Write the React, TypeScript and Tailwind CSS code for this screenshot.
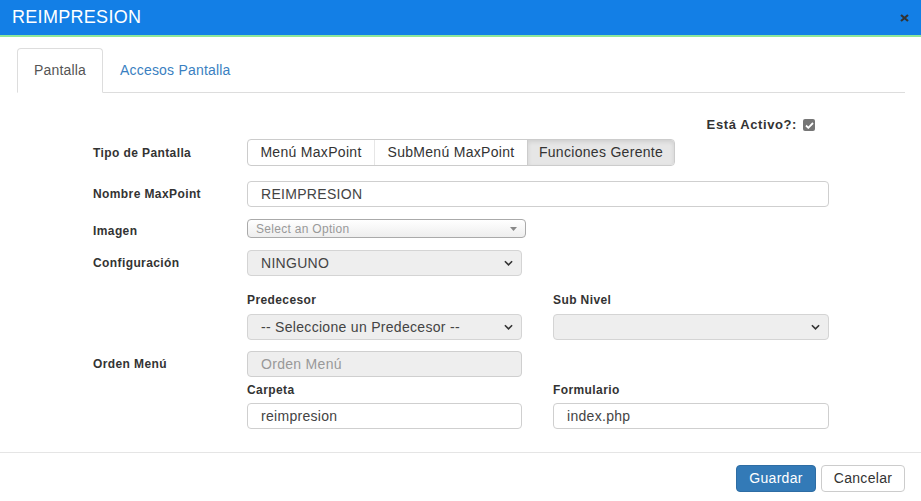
import React from "react";

const Chevron = () => (
  <svg className="w-[9px] h-[6px]" viewBox="0 0 10 6" fill="none" stroke="#333" strokeWidth="1.8">
    <path d="M1 1l4 4 4-4" />
  </svg>
);

const SelectBox = ({ value, w = "w-[275px]" }: { value: string; w?: string }) => (
  <div className={`${w} h-[26px] flex items-center justify-between rounded-[4px] border border-[#d4d4d4] bg-[#eeeeee] pl-[13px] pr-[8px] text-[14px] tracking-[0.3px] text-[#444]`}>
    <span>{value}</span>
    <Chevron />
  </div>
);

const TextBox = ({ value, w = "w-[275px]", disabled = false }: { value: string; w?: string; disabled?: boolean }) => (
  <div
    className={`${w} h-[26px] flex items-center rounded-[4px] border border-[#cfcfcf] pl-[13px] text-[14px] tracking-[0.3px] ${
      disabled ? "bg-[#eeeeee] text-[#999]" : "bg-white text-[#444]"
    }`}
  >
    {value}
  </div>
);

export default function App() {
  return (
    <div className="w-[921px] h-[501px] bg-white font-['Liberation_Sans',Arial,sans-serif] text-[#333] overflow-hidden">
      {/* header */}
      <div className="h-[37px] bg-[#137fe6] border-b-[2px] border-[#8fe69a] flex items-center justify-between pl-[12px] pr-[12px]">
        <h1 className="text-[18px] text-white tracking-[0.3px]">REIMPRESION</h1>
        <svg className="w-[9px] h-[8px]" viewBox="0 0 9 8" stroke="#333" strokeWidth="2.2">
          <path d="M1 1l7 6M8 1L1 7" />
        </svg>
      </div>

      {/* tabs */}
      <div className="px-[17px] pr-[16px] pt-[11px]">
        <div className="flex border-b border-[#dddddd] h-[45px]">
          <div className="w-[86px] h-[45px] -mb-px flex items-center justify-center rounded-t-[4px] border border-[#dddddd] border-b-white bg-white text-[14px] tracking-[0.2px] text-[#555]">
            Pantalla
          </div>
          <div className="ml-[17px] flex items-center text-[14px] tracking-[0.2px] text-[#3a7fc1]">Accesos Pantalla</div>
        </div>
      </div>

      {/* form */}
      <div className="pl-[93px] w-[829px]">
        <div className="mt-[25px] h-[14px] flex items-center justify-end pr-[14px] text-[13px] font-bold tracking-[0.6px] text-[#333]">
          <span>Está Activo?:</span>
          <span className="ml-[6px] w-[12px] h-[12px] rounded-[2px] bg-[#767676] flex items-center justify-center">
            <svg className="w-[9px] h-[7px]" viewBox="0 0 9 7" fill="none" stroke="white" strokeWidth="1.8">
              <path d="M1 3.5l2.3 2.3L8 1" />
            </svg>
          </span>
        </div>

        <div className="mt-[7px] flex items-center">
          <div className="w-[154px] text-[12px] font-bold tracking-[0.4px]">Tipo de Pantalla</div>
          <div className="flex h-[27px] rounded-[4px] border border-[#cccccc] text-[14px] tracking-[0.3px] text-[#333]">
            <div className="w-[126px] flex items-center justify-center">Menú MaxPoint</div>
            <div className="w-[153px] flex items-center justify-center border-l border-[#e6e6e6]">SubMenú MaxPoint</div>
            <div className="w-[147px] flex items-center justify-center bg-[#e6e6e6] border-l border-[#cccccc] rounded-r-[3px] shadow-[inset_0_2px_4px_rgba(0,0,0,0.1)]">
              Funciones Gerente
            </div>
          </div>
        </div>

        <div className="mt-[15px] flex items-center">
          <div className="w-[154px] text-[12px] font-bold tracking-[0.4px]">Nombre MaxPoint</div>
          <TextBox value="REIMPRESION" w="w-[582px]" />
        </div>

        <div className="mt-[12px] flex items-start h-[19px]">
          <div className="w-[154px] text-[12px] font-bold tracking-[0.4px] leading-[14px] pt-[5px]">Imagen</div>
          <div className="w-[279px] h-[19px] flex items-center justify-between rounded-[4px] border border-[#aaaaaa] bg-gradient-to-b from-white to-[#eeeeee] pl-[8px] pr-[8px] text-[12px] tracking-[0.3px] text-[#999]">
            <span>Select an Option</span>
            <svg className="w-[7px] h-[4px]" viewBox="0 0 7 4" fill="#888">
              <path d="M0 0h7L3.5 4z" />
            </svg>
          </div>
        </div>

        <div className="mt-[12px] flex items-center">
          <div className="w-[154px] text-[12px] font-bold tracking-[0.4px]">Configuración</div>
          <SelectBox value="NINGUNO" />
        </div>

        <div className="mt-[17px] flex h-[14px] items-center text-[12px] font-bold tracking-[0.4px]">
          <div className="w-[154px]" />
          <div className="w-[306px]">Predecesor</div>
          <div>Sub Nivel</div>
        </div>

        <div className="mt-[7px] flex items-center">
          <div className="w-[154px]" />
          <SelectBox value="-- Seleccione un Predecesor --" />
          <div className="ml-[31px]">
            <SelectBox value="" w="w-[276px]" />
          </div>
        </div>

        <div className="mt-[11px] flex items-center">
          <div className="w-[154px] text-[12px] font-bold tracking-[0.4px]">Orden Menú</div>
          <TextBox value="Orden Menú" disabled />
        </div>

        <div className="mt-[6px] flex h-[14px] items-center text-[12px] font-bold tracking-[0.4px]">
          <div className="w-[154px]" />
          <div className="w-[306px]">Carpeta</div>
          <div>Formulario</div>
        </div>

        <div className="mt-[6px] flex items-center">
          <div className="w-[154px]" />
          <TextBox value="reimpresion" />
          <div className="ml-[31px]">
            <TextBox value="index.php" w="w-[276px]" />
          </div>
        </div>
      </div>

      {/* footer */}
      <div className="mt-[23px] border-t border-[#e5e5e5] flex justify-end gap-[5px] pt-[12px] pr-[16px]">
        <button className="w-[80px] h-[27px] rounded-[4px] border border-[#2e6da4] bg-[#337ab7] text-[14px] tracking-[0.3px] text-white">
          Guardar
        </button>
        <button className="w-[84px] h-[27px] rounded-[4px] border border-[#cccccc] bg-white text-[14px] tracking-[0.3px] text-[#333]">
          Cancelar
        </button>
      </div>
    </div>
  );
}
